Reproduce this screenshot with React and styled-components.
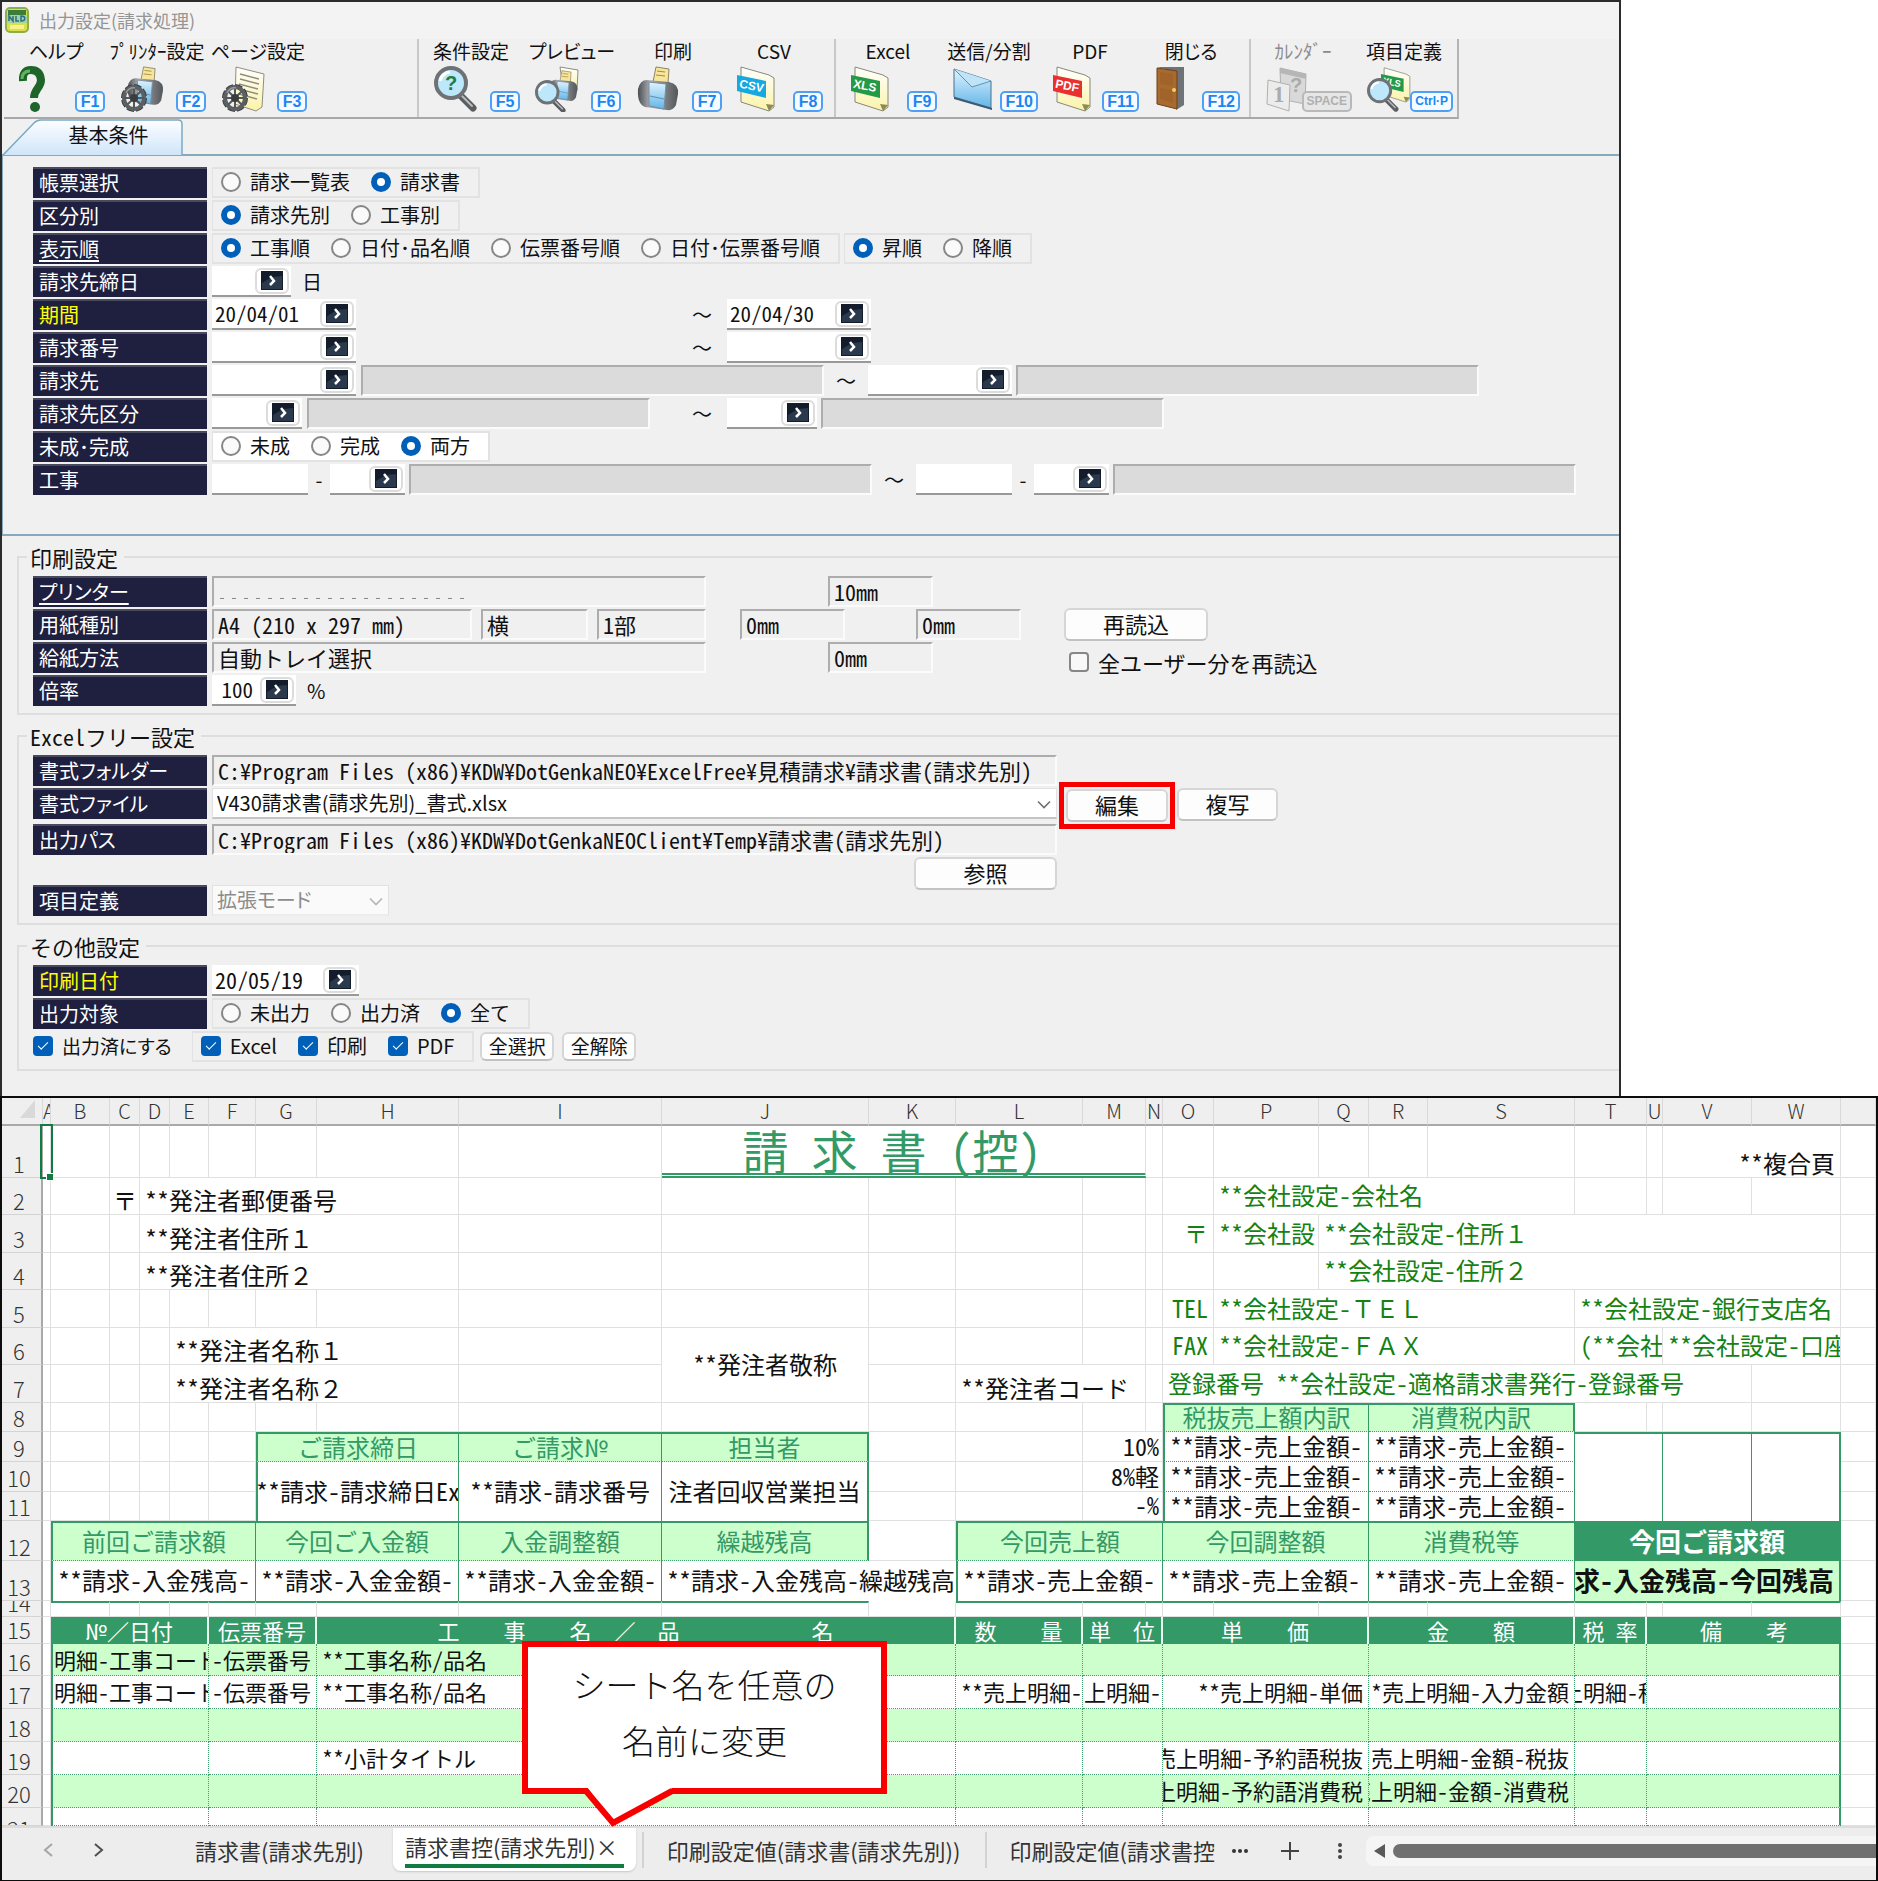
import React from 'react';
import styled, { createGlobalStyle, css } from 'styled-components';

const GREEN = '#339966';
const MINT = '#ccffcc';
const NAVY = '#1f1f40';

const Global = createGlobalStyle`
  *, *::before, *::after { box-sizing: border-box; }
  body {
    margin: 0;
    background: #fff;
    color: #111;
    font-family: "Noto Sans CJK JP", "Noto Sans", sans-serif;
    font-size: 20px;
    line-height: 24px;
  }
  button, input, select { font: inherit; color: inherit; margin: 0; }
`;

/* ---------- settings window ---------- */

const Window = styled.section`
  max-width: 1621px;
  border: 2px solid #2b2b2b;
  border-bottom: 0;
  background: #f0f0f0;
  padding-bottom: 25px;
  overflow: hidden;
  white-space: nowrap;
`;

const TitleBar = styled.header`
  display: flex;
  align-items: center;
  gap: 10px;
  height: 37px;
  padding: 0 0 2px 3px;
  background: #f3f3f3;
`;

const Title = styled.h1`
  margin: 0;
  font-size: 18px;
  font-weight: 400;
  line-height: 24px;
  color: #959595;
`;

const Toolbar = styled.nav`
  display: flex;
  width: 1455px;
  height: 80px;
  margin-left: 2px;
  border-right: 2px solid #b4b4b4;
  border-bottom: 2px solid #a8a8a8;
`;

const ToolGroup = styled.div`
  display: flex;
  padding-right: ${(p) => p.$end}px;
  & + & {
    border-left: 2px solid #c8c8c8;
  }
`;

const Tool = styled.button`
  display: flex;
  flex-direction: column;
  width: 101px;
  padding: 1px 0 0 15px;
  border: 0;
  background: none;
  color: ${(p) => (p.disabled ? '#8a8a8a' : '#111')};
`;

const ToolLabel = styled.span`
  align-self: stretch;
  display: flex;
  justify-content: center;
  margin-left: -12px;
  font-size: 19px;
  line-height: 22px;
  font-feature-settings: "palt";
`;

const ToolIcons = styled.span`
  align-self: stretch;
  display: flex;
  justify-content: space-between;
  align-items: flex-end;
  margin-top: 4px;
`;

const KeyCap = styled.kbd`
  min-width: 30px;
  height: 21px;
  margin-left: -10px;
  padding: 0 3px;
  border: 2px solid ${(p) => (p.$off ? '#b9b9b9' : '#4da0f5')};
  border-radius: 5px;
  background: ${(p) => (p.$off ? '#e6e6e6' : '#f6fbff')};
  color: ${(p) => (p.$off ? '#b0b0b0' : '#1c86f2')};
  font-family: "Liberation Sans", sans-serif;
  font-size: ${(p) => (p.$small ? 12 : 16)}px;
  font-weight: 700;
  line-height: 17px;
  text-align: center;
  position: relative;
`;

const TabStrip = styled.div`
  height: 35px;
`;

const TabButton = styled.button`
  position: relative;
  width: 181px;
  height: 36px;
  padding: 0 0 4px 32px;
  border: 0;
  background: none;
  svg { position: absolute; inset: 0; }
  span { position: relative; }
`;

const Panel = styled.div`
  display: flex;
  flex-direction: column;
  gap: 2px;
  padding: 11px 0 39px 30px;
  border: solid #86aabd;
  border-width: 2px 0 2px 1px;
`;

const Row = styled.div`
  display: flex;
  align-items: stretch;
  height: 31px;
`;

const labelLook = css`
  flex: none;
  width: 174px;
  margin-right: 5px;
  padding: 2px 0 0 6px;
  border-top: 2px solid #4a4a5e;
  background: ${NAVY};
  color: ${(p) => (p.$key ? '#ffff00' : '#fff')};
  text-decoration: ${(p) => (p.$link ? 'underline' : 'none')};
  text-underline-offset: 3px;
  font-feature-settings: "palt";
`;

const Name = styled.label`${labelLook}`;
const GroupName = styled.span`${labelLook}`;

const Group = styled.div`
  display: flex;
  align-items: center;
  gap: 21px;
  padding: 0 18px 0 8px;
  margin-right: 4px;
  border: 2px solid #e2e2e2;
  border-left-width: 1px;
  background: ${(p) => (p.$white ? '#fff' : 'transparent')};
`;

const Choice = styled.label`
  display: flex;
  align-items: center;
  gap: 9px;
  padding-bottom: 2px;
  font-size: ${(p) => p.$size || 20}px;
  font-feature-settings: ${(p) => (p.$tight ? '"palt"' : 'normal')};
`;

const Radio = styled.input.attrs({ type: 'radio' })`
  appearance: none;
  width: 20px;
  height: 20px;
  border: 2px solid #868686;
  border-radius: 50%;
  background: #fafafa;
  &:checked {
    border: 6px solid #005fb8;
    background: #fff;
  }
`;

const CheckInput = styled.input.attrs({ type: 'checkbox' })`
  appearance: none;
  display: grid;
  place-items: center;
  width: 20px;
  height: 20px;
  border: 2px solid #868686;
  border-radius: 4px;
  background: #f8f8f8;
  &:checked {
    border-color: #005fb8;
    background: #005fb8;
  }
  &:checked::before {
    content: "";
    width: 10px;
    height: 5px;
    margin-top: -3px;
    border: solid #fff;
    border-width: 0 0 1px 1px;
    transform: rotate(-45deg);
  }
`;

const EntryBox = styled.span`
  flex: none;
  display: flex;
  align-items: center;
  width: ${(p) => p.$w}px;
  padding-right: 2px;
  border-bottom: 2px solid #999;
  background: #fff;
`;

const EntryInput = styled.input`
  flex: 1;
  min-width: 0;
  padding: 0 ${(p) => (p.$align ? 7 : 3)}px 2px 3px;
  border: 0;
  background: none;
  font-size: ${(p) => p.$size || 21}px;
  font-feature-settings: "hwid";
  text-align: ${(p) => p.$align || 'left'};
`;

const PickButton = styled.button`
  flex: none;
  display: grid;
  place-items: center;
  width: 34px;
  height: 26px;
  padding: 0;
  border: 2px solid #dcdcdc;
  border-radius: 6px;
  background: #fff;
`;

const Shade = styled.input.attrs({ readOnly: true })`
  flex: none;
  width: ${(p) => p.$w}px;
  height: 31px;
  margin-left: ${(p) => p.$gap || 0}px;
  padding: 0 4px 2px;
  border: 2px solid;
  border-color: #adadad #fbfbfb #fbfbfb #adadad;
  background: ${(p) => (p.$plain ? '#f0f0f0' : '#dbdbdb')};
  font-size: 22px;
  line-height: 25px;
  font-feature-settings: "hwid";
`;

const ErasedName = styled(Shade)`
  background:
    repeating-linear-gradient(90deg, #8a8a8a 0 4px, transparent 4px 12px) 6px 20px / 250px 1px no-repeat,
    #f0f0f0;
`;

const Between = styled.span`
  flex: none;
  display: flex;
  align-items: center;
  justify-content: center;
  width: ${(p) => p.$w}px;
`;

const Lead = styled.span`
  flex: none;
  display: flex;
  width: 465px;
`;

const Unit = styled.span`
  align-self: center;
  margin-left: 11px;
`;

const Section = styled.fieldset`
  min-width: 0;
  margin: 9px 0 0 15px;
  padding: 7px 0 7px 14px;
  border: 2px solid #dedede;
  border-right: 0;
  legend {
    margin-left: -6px;
    padding: 0 6px 0 3px;
    font-size: 22px;
    line-height: 24px;
    font-feature-settings: "hwid";
  }
`;

const Rows = styled.div`
  display: flex;
  flex-direction: column;
  gap: 2px;
`;

const PrintLayout = styled.div`
  display: flex;
  align-items: flex-start;
`;

const PaperRow = styled.div`
  display: flex;
  justify-content: space-between;
  width: 494px;
`;

const Margins = styled.div`
  display: flex;
  flex-direction: column;
  align-items: center;
  gap: 2px;
  width: 281px;
  margin: 0 43px 0 34px;
`;

const MarginPair = styled.div`
  align-self: stretch;
  display: flex;
  justify-content: space-between;
`;

const Reload = styled.div`
  display: flex;
  flex-direction: column;
  gap: 9px;
  padding-top: 32px;
  ${Choice} { padding-left: 5px; }
`;

const PushButton = styled.button`
  flex: none;
  width: ${(p) => p.$w}px;
  height: ${(p) => p.$h || 33}px;
  padding: 0 0 3px;
  border: 2px solid #d6d6d6;
  border-bottom-color: #c2c2c2;
  border-radius: 6px;
  background: #fdfdfd;
  font-size: ${(p) => p.$size || 22}px;
  line-height: 24px;
`;

const Highlight = styled.span`
  flex: none;
  display: grid;
  place-items: center;
  width: 116px;
  height: 47px;
  margin: -6px 2px 0;
  border: 5px solid #f70000;
`;

const SelectWrap = styled.span`
  flex: none;
  position: relative;
  display: flex;
  width: ${(p) => p.$w}px;
  svg { position: absolute; right: 6px; top: 12px; pointer-events: none; }
`;

const Select = styled.select`
  appearance: none;
  width: 100%;
  padding: 0 4px;
  border: 1px solid #e2e2e2;
  border-bottom: 2px solid ${(p) => (p.disabled ? '#ececec' : '#c4c4c4')};
  background: ${(p) => (p.disabled ? '#fafafa' : '#fff')};
  color: ${(p) => (p.disabled ? '#8c8c8c' : '#111')};
  font-size: 20px;
  opacity: 1;
  font-feature-settings: "palt";
`;

const FileRow = styled(Row)`
  margin-bottom: 3px;
`;

const DefRow = styled.div`
  display: flex;
  justify-content: space-between;
  align-items: flex-start;
  width: 1024px;
  height: 59px;
  ${Row} { align-self: flex-end; }
`;

const FinishRow = styled(Row)`
  gap: 5px;
  ${Group} { margin: 0 1px 0 15px; }
  ${PushButton} { align-self: center; margin-right: 3px; }
`;

const Chevron = ({ color = '#707070' }) => (
  <svg width="14" height="9" viewBox="0 0 14 9" fill="none" stroke={color} strokeWidth="1.6">
    <path d="M1 1.5l6 6 6-6" />
  </svg>
);

function Pick({ label }) {
  return (
    <PickButton type="button" aria-label={label}>
      <svg width="22" height="19" viewBox="0 0 22 19">
        <rect width="22" height="19" fill="#131c2a" />
        <path d="M1 18V12L11 6l10-1v13z" fill="#2b394c" />
        <path d="M9 5l4 5-4 4" fill="none" stroke="#fff" strokeWidth="2.500" />
      </svg>
    </PickButton>
  );
}

function Entry({ id, label, w, value = '', pick = true, size, align }) {
  return (
    <EntryBox $w={w}>
      <EntryInput id={id} aria-label={label} defaultValue={value} $size={size} $align={align} />
      {pick && <Pick label={`${label} 選択`} />}
    </EntryBox>
  );
}

function Radios({ name, items, value, white }) {
  return (
    <Group role="radiogroup" aria-label={name} $white={white}>
      {items.map((t) => (
        <Choice key={t}>
          <Radio name={name} defaultChecked={t === value} />
          {t}
        </Choice>
      ))}
    </Group>
  );
}

function Check({ text, on, size, tight }) {
  return (
    <Choice $size={size} $tight={tight}>
      <CheckInput defaultChecked={on} />
      {text}
    </Choice>
  );
}

/* ---------- toolbar drawings ---------- */

const Svg = ({ children, off }) => (
  <svg width="44" height="46" viewBox="0 0 44 46" opacity={off ? 0.8 : 1} aria-hidden="true">
    <defs>
      <linearGradient id="metal" x1="0" x2="1">
        <stop offset="0" stopColor="#4c4f52" />
        <stop offset=".3" stopColor="#a9adb1" />
        <stop offset="1" stopColor="#54575a" />
      </linearGradient>
      <linearGradient id="sky" x1="0" y1="0" x2="0" y2="1">
        <stop offset="0" stopColor="#dff3ff" />
        <stop offset="1" stopColor="#62b5e8" />
      </linearGradient>
      <linearGradient id="paper" x1="0" y1="0" x2="0" y2="1">
        <stop offset="0" stopColor="#ffffff" />
        <stop offset="1" stopColor="#fbf3a8" />
      </linearGradient>
    </defs>
    {children}
  </svg>
);

const PrinterShape = () => (
  <g>
    <path d="M17 16l3-15 13 2-1 14z" fill="#f8e59a" stroke="#8a8567" />
    <path d="M21 5l8 1M20 9l9 1" stroke="#9c8b4a" />
    <path d="M2 23q2-9 9-9l22 2q10 2 9 12l-2 11q-3 6-9 5L9 41q-8-3-7-18z" fill="url(#metal)" />
    <path d="M13 16l17 2-2 25-15-3z" fill="url(#sky)" stroke="#7b8d99" />
    <path d="M14 30l14 3" stroke="#5591b8" />
  </g>
);

const SPOKES = [0, 45, 90, 135];

const GearShape = () => (
  <g>
    <ellipse cx="14" cy="32" rx="11" ry="12" fill="none" stroke="#3a3c3e" strokeWidth="4" strokeDasharray="7 2" />
    <ellipse cx="14" cy="32" rx="10" ry="11" fill="none" stroke="#5d6063" strokeWidth="4" />
    {SPOKES.map((a) => (
      <path key={a} d="M14 22v20" stroke="#55585b" strokeWidth="2" transform={`rotate(${a} 14 32)`} />
    ))}
    <circle cx="14" cy="32" r="4" fill="#3a3c3e" />
    <path d="M6 27q3-6 9-5" stroke="#9a9da0" fill="none" strokeWidth="1.500" />
  </g>
);

const PageShape = () => (
  <g>
    <path d="M15 1l28 7-2 33-6 4-21-7z" fill="url(#paper)" stroke="#8f8e7c" />
    <path d="M19 8l19 5M19 13l19 5M18 18l19 5M18 23l19 5M18 28l18 5" stroke="#8f8e7c" strokeWidth="1.500" />
  </g>
);

const Lens = ({ children }) => (
  <g>
    <path d="M25 28l14 14" stroke="#5b5e61" strokeWidth="7" strokeLinecap="round" />
    <path d="M25 27l13 13" stroke="#b9bcbf" strokeWidth="2" strokeLinecap="round" />
    <ellipse cx="17" cy="17" rx="15" ry="15" fill="#bde7fb" stroke="#6e7275" strokeWidth="4" />
    <path d="M6 15q2-8 10-9" stroke="#fff" strokeWidth="3" fill="none" />
    {children}
  </g>
);

const FileShape = ({ text, color }) => (
  <g>
    <path d="M4 1l28 8 5 3v29l-5 4-28-9z" fill="url(#paper)" stroke="#87877b" />
    <path d="M37 39l-8-1 3 7z" fill="#8d8a55" />
    <path d="M0 9l29 6v17L0 25z" fill={color} />
    <text x="2" y="22" fontFamily="Liberation Sans, sans-serif" fontSize="12" fontWeight="700" fill="#fff" transform="rotate(11 4 20)">{text}</text>
  </g>
);

const ICONS = {
  help: (
    <Svg>
      <path d="M4 15q-1-11 8-11t10 10c0 8-7 9-7 18" fill="none" stroke="#1f6428" strokeWidth="8" />
      <path d="M3 13q0-8 8-8" fill="none" stroke="#5fb45f" strokeWidth="3" />
      <circle cx="16" cy="41" r="5" fill="#1f6428" />
    </Svg>
  ),
  printerGear: (
    <Svg>
      <g transform="translate(6 0) scale(.88)"><PrinterShape /></g>
      <GearShape />
    </Svg>
  ),
  pageGear: <Svg><PageShape /><GearShape /></Svg>,
  ask: (
    <Svg>
      <Lens>
        <text x="11" y="24" fontFamily="Liberation Sans, sans-serif" fontSize="20" fontWeight="700" fill="#267c3c">?</text>
      </Lens>
    </Svg>
  ),
  preview: (
    <Svg>
      <path d="M25 1l18 3-1 20-14-2z" fill="url(#paper)" stroke="#8f8e7c" />
      <g transform="translate(13 4) scale(.7)"><PrinterShape /></g>
      <g transform="translate(0 14) scale(.72)"><Lens /></g>
    </Svg>
  ),
  printer: <Svg><PrinterShape /></Svg>,
  csv: <Svg><FileShape text="CSV" color="#16a8e0" /></Svg>,
  xls: <Svg><FileShape text="XLS" color="#229a48" /></Svg>,
  pdf: <Svg><FileShape text="PDF" color="#ea2f2f" /></Svg>,
  mail: (
    <Svg>
      <path d="M2 3l37 12v27L2 31z" fill="url(#sky)" stroke="#4c6f88" />
      <path d="M2 3l18 18L39 15" fill="#bfe4f8" stroke="#5b93b7" />
      <path d="M2 31l38 11v2L2 33z" fill="#3c5a70" />
    </Svg>
  ),
  door: (
    <Svg>
      <path d="M3 1h27v38l-8 5V6z" fill="#6f7276" />
      <path d="M3 2l20 3v38L3 38z" fill="#a86a2f" stroke="#6b4119" />
      <path d="M6 6l13 2v12L6 18zM6 22l13 2v13L6 33z" fill="#a0642a" />
      <circle cx="20" cy="24" r="2" fill="#f0cf5d" />
    </Svg>
  ),
  calendar: (
    <Svg off>
      <path d="M14 2l26 6-1 30-24-5z" fill="#d4d4d4" stroke="#a0a0a0" />
      <path d="M14 2l26 6v5L14 7z" fill="#a8a8a8" />
      <path d="M2 14l22 5-1 26-22-7z" fill="#ececec" stroke="#a0a0a0" />
      <text x="7" y="36" fontFamily="Liberation Serif, serif" fontSize="23" fontWeight="700" fill="#9a9a9a">1</text>
      <text x="24" y="26" fontFamily="Liberation Sans, sans-serif" fontSize="20" fontWeight="700" fill="#9a9a9a">?</text>
    </Svg>
  ),
  define: (
    <Svg>
      <g transform="translate(14 1) scale(.78)"><FileShape text="XLS" color="#229a48" /></g>
      <g transform="translate(0 12) scale(.74)"><Lens /></g>
    </Svg>
  ),
};

const TOOLS = [
  { end: 110, items: [['ヘルプ', 'help', 'F1'], ['ﾌﾟﾘﾝﾀｰ設定', 'printerGear', 'F2'], ['ページ設定', 'pageGear', 'F3']] },
  { end: 11, items: [['条件設定', 'ask', 'F5'], ['プレビュー', 'preview', 'F6'], ['印刷', 'printer', 'F7'], ['CSV', 'csv', 'F8']] },
  { end: 9, items: [['Excel', 'xls', 'F9'], ['送信/分割', 'mail', 'F10'], ['PDF', 'pdf', 'F11'], ['閉じる', 'door', 'F12']] },
  { end: 4, items: [['ｶﾚﾝﾀﾞｰ', 'calendar', 'SPACE'], ['項目定義', 'define', 'Ctrl·P']] },
];

function SettingsWindow() {
  return (
    <Window>
      <TitleBar>
        <svg width="24" height="26" viewBox="0 0 24 26" aria-hidden="true">
          <rect x="1" y="1" width="22" height="24" rx="4" fill="#dbe04a" stroke="#8fae4a" strokeWidth="2" />
          <rect x="3" y="3" width="18" height="5" fill="#3d7d3a" />
          <rect x="2" y="8" width="20" height="8" fill="#a5d3a0" />
          <path d="M4 14V9l4 5V9M11 9v5h3M16 14c5 0 5-5 0-5z" stroke="#2a6f86" strokeWidth="1.500" fill="none" />
          <path d="M5 20h14" stroke="#f6f28e" strokeWidth="4" />
        </svg>
        <Title>出力設定(請求処理)</Title>
      </TitleBar>
      <Toolbar>
        {TOOLS.map((g) => (
          <ToolGroup key={g.items[0][0]} $end={g.end}>
            {g.items.map(([label, icon, key]) => (
              <Tool key={key} type="button" disabled={key === 'SPACE'}>
                <ToolLabel>{label}</ToolLabel>
                <ToolIcons>
                  {ICONS[icon]}
                  <KeyCap $small={key.length > 3} $off={key === 'SPACE'}>{key}</KeyCap>
                </ToolIcons>
              </Tool>
            ))}
          </ToolGroup>
        ))}
      </Toolbar>
      <TabStrip>
        <TabButton type="button">
          <svg width="181" height="36" viewBox="0 0 181 36" aria-hidden="true">
            <defs>
              <linearGradient id="tab" x1="0" y1="0" x2="0" y2="1">
                <stop offset="0" stopColor="#fdfeff" />
                <stop offset="1" stopColor="#cfe5fa" />
              </linearGradient>
            </defs>
            <path d="M1 36L32 4q3-3 7-3h137q4 0 4 4v31" fill="url(#tab)" stroke="#79a9c4" strokeWidth="1.500" />
          </svg>
          <span>基本条件</span>
        </TabButton>
      </TabStrip>
      <Panel>
        <Row>
          <GroupName>帳票選択</GroupName>
          <Radios name="帳票選択" items={['請求一覧表', '請求書']} value="請求書" />
        </Row>
        <Row>
          <GroupName>区分別</GroupName>
          <Radios name="区分別" items={['請求先別', '工事別']} value="請求先別" />
        </Row>
        <Row>
          <GroupName $link>表示順</GroupName>
          <Radios name="表示順" items={['工事順', '日付･品名順', '伝票番号順', '日付･伝票番号順']} value="工事順" />
          <Radios name="並び" items={['昇順', '降順']} value="昇順" />
        </Row>
        <Row>
          <Name htmlFor="close">請求先締日</Name>
          <Entry id="close" label="請求先締日" w={79} />
          <Unit>日</Unit>
        </Row>
        <Row>
          <Name htmlFor="term" $key>期間</Name>
          <Lead><Entry id="term" label="期間 開始" w={144} value="20/04/01" /></Lead>
          <Between $w={50}>～</Between>
          <Entry label="期間 終了" w={144} value="20/04/30" />
        </Row>
        <Row>
          <Name htmlFor="no">請求番号</Name>
          <Lead><Entry id="no" label="請求番号 開始" w={144} /></Lead>
          <Between $w={50}>～</Between>
          <Entry label="請求番号 終了" w={144} />
        </Row>
        <Row>
          <Name htmlFor="dest">請求先</Name>
          <Entry id="dest" label="請求先 開始" w={144} />
          <Shade $w={463} $gap={5} aria-label="請求先名 開始" />
          <Between $w={44}>～</Between>
          <Entry label="請求先 終了" w={144} />
          <Shade $w={463} $gap={4} aria-label="請求先名 終了" />
        </Row>
        <Row>
          <Name htmlFor="kind">請求先区分</Name>
          <Lead>
            <Entry id="kind" label="請求先区分 開始" w={90} />
            <Shade $w={343} $gap={5} aria-label="請求先区分名 開始" />
          </Lead>
          <Between $w={50}>～</Between>
          <Entry label="請求先区分 終了" w={90} />
          <Shade $w={343} $gap={4} aria-label="請求先区分名 終了" />
        </Row>
        <Row>
          <GroupName>未成･完成</GroupName>
          <Radios name="未成･完成" items={['未成', '完成', '両方']} value="両方" white />
        </Row>
        <Row>
          <Name htmlFor="work">工事</Name>
          <Entry id="work" label="工事 開始" w={96} pick={false} />
          <Between $w={22}>-</Between>
          <Entry label="工事 枝番 開始" w={75} />
          <Shade $w={463} $gap={4} aria-label="工事名 開始" />
          <Between $w={44}>～</Between>
          <Entry label="工事 終了" w={96} pick={false} />
          <Between $w={22}>-</Between>
          <Entry label="工事 枝番 終了" w={75} />
          <Shade $w={463} $gap={4} aria-label="工事名 終了" />
        </Row>
      </Panel>

      <Section>
        <legend>印刷設定</legend>
        <PrintLayout>
          <Rows>
            <Row>
              <GroupName $link>プリンター</GroupName>
              <ErasedName $w={494} aria-label="プリンター" />
            </Row>
            <Row>
              <GroupName>用紙種別</GroupName>
              <PaperRow>
                <Shade $w={260} $plain aria-label="用紙" defaultValue="A4 (210 x 297 mm)" />
                <Shade $w={107} $plain aria-label="向き" defaultValue="横" />
                <Shade $w={109} $plain aria-label="部数" defaultValue="1部" />
              </PaperRow>
            </Row>
            <Row>
              <GroupName>給紙方法</GroupName>
              <Shade $w={494} $plain aria-label="給紙方法" defaultValue="自動トレイ選択" />
            </Row>
            <Row>
              <Name htmlFor="zoom">倍率</Name>
              <Entry id="zoom" label="倍率" w={84} value="100" align="right" />
              <Unit>%</Unit>
            </Row>
          </Rows>
          <Margins>
            <Shade $w={105} $plain aria-label="上余白" defaultValue="10mm" />
            <MarginPair>
              <Shade $w={105} $plain aria-label="左余白" defaultValue="0mm" />
              <Shade $w={105} $plain aria-label="右余白" defaultValue="0mm" />
            </MarginPair>
            <Shade $w={105} $plain aria-label="下余白" defaultValue="0mm" />
          </Margins>
          <Reload>
            <PushButton type="button" $w={144}>再読込</PushButton>
            <Check text="全ユーザー分を再読込" size={22} />
          </Reload>
        </PrintLayout>
      </Section>

      <Section>
        <legend>Excelフリー設定</legend>
        <Rows>
          <Row>
            <GroupName>書式フォルダー</GroupName>
            <Shade $w={845} $plain aria-label="書式フォルダー" defaultValue="C:¥Program Files (x86)¥KDW¥DotGenkaNEO¥ExcelFree¥見積請求¥請求書(請求先別)" />
          </Row>
          <FileRow>
            <Name htmlFor="file">書式ファイル</Name>
            <SelectWrap $w={845}>
              <Select id="file"><option>V430請求書(請求先別)_書式.xlsx</option></Select>
              <Chevron />
            </SelectWrap>
            <Highlight><PushButton type="button" $w={102}>編集</PushButton></Highlight>
            <PushButton type="button" $w={101}>複写</PushButton>
          </FileRow>
          <Row>
            <GroupName>出力パス</GroupName>
            <Shade $w={845} $plain aria-label="出力パス" defaultValue="C:¥Program Files (x86)¥KDW¥DotGenkaNEOClient¥Temp¥請求書(請求先別)" />
          </Row>
          <DefRow>
            <Row>
              <Name htmlFor="def">項目定義</Name>
              <SelectWrap $w={177}>
                <Select id="def" disabled><option>拡張モード</option></Select>
                <Chevron color="#b5b5b5" />
              </SelectWrap>
            </Row>
            <PushButton type="button" $w={143}>参照</PushButton>
          </DefRow>
        </Rows>
      </Section>

      <Section>
        <legend>その他設定</legend>
        <Rows>
          <Row>
            <Name htmlFor="date" $key>印刷日付</Name>
            <Entry id="date" label="印刷日付" w={147} value="20/05/19" size={22} />
          </Row>
          <Row>
            <GroupName>出力対象</GroupName>
            <Radios name="出力対象" items={['未出力', '出力済', '全て']} value="全て" />
          </Row>
          <FinishRow>
            <Check text="出力済にする" on size={19} tight />
            <Group>
              <Check text="Excel" on tight />
              <Check text="印刷" on tight />
              <Check text="PDF" on tight />
            </Group>
            <PushButton type="button" $w={74} $h={29} $size={19}>全選択</PushButton>
            <PushButton type="button" $w={74} $h={29} $size={19}>全解除</PushButton>
          </FinishRow>
        </Rows>
      </Section>
    </Window>
  );
}

/* ---------- spreadsheet ---------- */

const Book = styled.section`
  position: relative;
  border: 2px solid #0d0d0d;
  background: #fff;
  overflow: hidden;
`;

const Grid = styled.table`
  width: 100%;
  table-layout: fixed;
  border-collapse: separate;
  border-spacing: 0;
`;

const ColHead = styled.th`
  height: 27px;
  padding: 0;
  border-right: 1px solid #d9d9d9;
  border-bottom: 2px solid #a9a9a9;
  background: #efefef;
  color: #333;
  font-size: 20px;
  font-weight: 300;
  line-height: 24px;
  overflow: ${(p) => (p.$clip ? 'hidden' : 'visible')};
`;

const RowHead = styled.th`
  padding: 0;
  border-right: 2px solid #a9a9a9;
  border-bottom: 1px solid #d4d4d4;
  background: #efefef;
  color: #333;
  font-size: 22px;
  font-weight: 300;
  vertical-align: bottom;
`;

const RowNumber = styled.div`
  display: flex;
  align-items: ${(p) => (p.$last ? 'flex-start' : 'flex-end')};
  justify-content: center;
  height: ${(p) => p.$h - 1}px;
  padding: ${(p) => (p.$last ? '8px 5px 0 0' : '0 5px 2px 0')};
  line-height: 24px;
  overflow: ${(p) => (p.$h < 20 ? 'hidden' : 'visible')};
`;

const EDGE = {
  g: '1px solid #e0e0e0',
  G: `1px solid ${GREEN}`,
  T: `2px solid ${GREEN}`,
  D: `5px double ${GREEN}`,
  d: '1px dotted #3f9f6f',
  w: '2px solid #e8fff0',
  n: '0',
};
const EDGE_SIZE = { g: 1, G: 1, T: 2, D: 5, d: 1, w: 2, n: 0 };

const Cell = styled.td`
  position: relative;
  z-index: ${(p) => (p.$front ? 1 : 'auto')};
  padding: 0;
  border-top: ${(p) => EDGE[p.$t]};
  border-right: ${(p) => EDGE[p.$r]};
  border-bottom: ${(p) => EDGE[p.$b]};
  border-left: ${(p) => EDGE[p.$l]};
  background: ${(p) => p.$bg};
  color: ${(p) => p.$fg};
  font-size: ${(p) => p.$size}px;
  font-weight: ${(p) => p.$weight};
`;

const CellText = styled.div`
  display: flex;
  align-items: ${(p) => p.$v};
  justify-content: ${(p) => p.$a};
  height: ${(p) => p.$h}px;
  padding: 0 ${(p) => p.$pad}px 2px;
  overflow-x: clip;
  white-space: pre;
  line-height: 1;
  font-feature-settings: "hwid";
`;

const Line = styled.span`
  flex: none;
`;

const Wide = styled.span`
  font-feature-settings: normal;
`;

const Cursor = styled.i`
  position: absolute;
  inset: -2px -3px -2px -3px;
  border: 2px solid #107c41;
  &::after {
    content: "";
    position: absolute;
    right: -3px;
    bottom: -4px;
    width: 8px;
    height: 8px;
    border: 1px solid #fff;
    background: #107c41;
  }
`;

const COLS = [
  ['A', 8], ['B', 59], ['C', 30], ['D', 30], ['E', 39], ['F', 47], ['G', 61], ['H', 142],
  ['I', 203], ['J', 207], ['K', 87], ['L', 127], ['M', 63], ['N', 17], ['O', 51], ['P', 105],
  ['Q', 50], ['R', 59], ['S', 147], ['T', 72], ['U', 16], ['V', 89], ['W', 89], ['', null],
];
const at = (letter) => COLS.findIndex((c) => c[0] === letter);

const cell = (range, text, opts = {}) => {
  const [from, to] = range.split(':');
  return { from: at(from), to: at(to || from), text, ...opts };
};

const info = { fg: '#138213' };
const head = { bg: MINT, fg: GREEN, a: 'center', b: 'd', r: 'G' };
const low = { v: 'flex-end' };
const val = { r: 'G', b: 'n' };

const titles = { bg: GREEN, fg: '#fff', a: 'center', b: 'n', r: 'w', size: 22 };
const TITLES = [
  ['B:E', '№／日付'], ['F:G', '伝票番号'], ['H:K', '工　　事　　名　／　品　　　　　　名'],
  ['L', '数　　量'], ['M:N', '単　位'], ['O:Q', '単　　価'], ['R:S', '金　　額'], ['T', '税 率'], ['U:W', '備　　考'],
];

const detail = (texts, bg) =>
  TITLES.map(([range]) => {
    const right = ['F:G', 'O:Q', 'R:S'].includes(range);
    const mid = ['M:N', 'T'].includes(range);
    return cell(range, texts[range], {
      bg,
      size: 22,
      pad: range === 'B:E' ? 1 : 5,
      a: right ? 'flex-end' : mid ? 'center' : 'flex-start',
      b: 'd',
      r: range === 'U:W' ? 'T' : 'd',
      l: range === 'B:E' ? 'T' : 'n',
    });
  });

const amounts = (t) => [
  cell('O:Q', '**請求-売上金額-', { b: t, r: 'G', l: 'T' }),
  cell('R:S', '**請求-売上金額-', { b: t, r: 'G' }),
];

const SHEET = [
  { n: 1, h: 52, cells: [
    cell('J:M', '請 求 書 (控) ', { fg: GREEN, a: 'center', b: 'D', size: 46 }),
    cell('V:W', '**複合頁', { a: 'flex-end', ...low }),
  ] },
  { n: 2, h: 37, cells: [
    cell('C', '〒', { ...low, pad: 2, a: 'flex-end' }), cell('D:H', '**発注者郵便番号', low),
    cell('P:S', '**会社設定-会社名', info),
  ] },
  { n: 3, h: 38, cells: [
    cell('D:H', '**発注者住所１', low), cell('O', '〒', { ...info, a: 'flex-end' }),
    cell('P', '**会社設', info), cell('Q:W', '**会社設定-住所１', info),
  ] },
  { n: 4, h: 37, cells: [cell('D:H', '**発注者住所２', low), cell('Q:W', '**会社設定-住所２', info)] },
  { n: 5, h: 38, cells: [
    cell('O', 'TEL', { ...info, a: 'flex-end' }), cell('P:S', '**会社設定-ＴＥＬ', info),
    cell('T:W', '**会社設定-銀行支店名', info),
  ] },
  { n: 6, h: 37, cells: [
    cell('E:H', '**発注者名称１', low), cell('J', '**発注者敬称', { rows: 2, a: 'center' }),
    cell('O', 'FAX', { ...info, a: 'flex-end' }), cell('P:S', '**会社設定-ＦＡＸ', info),
    cell('T:U', '(**会社', info), cell('V:W', '**会社設定-口座', info),
  ] },
  { n: 7, h: 38, cells: [
    cell('E:H', '**発注者名称２', low), cell('L:M', '**発注者コード', low),
    cell('O:V', '登録番号 **会社設定-適格請求書発行-登録番号', info),
  ] },
  { n: 8, h: 29, cells: [
    cell('O:Q', '税抜売上額内訳', { ...head, t: 'T', l: 'T' }),
    cell('R:S', '消費税内訳', { ...head, t: 'T', r: 'T' }),
  ] },
  { n: 9, h: 30, cells: [
    cell('G:H', 'ご請求締日', { ...head, t: 'T', l: 'T' }), cell('I', 'ご請求№', { ...head, t: 'T' }),
    cell('J', '担当者', { ...head, t: 'T', r: 'T' }), cell('M:N', '10%', { a: 'flex-end', pad: 3 }),
    ...amounts('d'),
    cell('T:U', '', { rows: 3, t: 'T', ...val }), cell('V', '', { rows: 3, t: 'T', ...val }),
    cell('W', '', { rows: 3, t: 'T', r: 'T', b: 'n' }),
  ] },
  { n: 10, h: 30, cells: [
    cell('G:H', '**請求-請求締日Ex', { rows: 2, l: 'T', a: 'center', ...val }),
    cell('I', '**請求-請求番号', { rows: 2, a: 'center', ...val }),
    cell('J', '注者回収営業担当', { rows: 2, a: 'center', r: 'T', b: 'n' }),
    cell('M:N', '8%軽', { a: 'flex-end', pad: 3 }), ...amounts('d'),
  ] },
  { n: 11, h: 29, cells: [cell('M:N', '-%', { a: 'flex-end', pad: 3 }), ...amounts('n')] },
  { n: 12, h: 40, cells: [
    cell('B:F', '前回ご請求額', { ...head, t: 'T', l: 'T' }), cell('G:H', '今回ご入金額', { ...head, t: 'T' }),
    cell('I', '入金調整額', { ...head, t: 'T' }), cell('J', '繰越残高', { ...head, t: 'T', r: 'T' }),
    cell('L:N', '今回売上額', { ...head, t: 'T', l: 'T' }), cell('O:Q', '今回調整額', { ...head, t: 'T' }),
    cell('R:S', '消費税等', { ...head, t: 'T' }),
    cell('T:W', '今回ご請求額', { bg: GREEN, fg: '#fff', weight: 700, size: 26, a: 'center', b: 'n', t: 'T', r: 'T' }),
  ] },
  { n: 13, h: 40, cells: [
    cell('B:F', '**請求-入金残高-', { l: 'T', ...val }), cell('G:H', '**請求-入金金額-', val),
    cell('I', '**請求-入金金額-', val), cell('J:K', '**請求-入金残高-繰越残高', { r: 'n', b: 'n' }),
    cell('L:N', '**請求-売上金額-', { l: 'T', ...val }), cell('O:Q', '**請求-売上金額-', val),
    cell('R:S', '**請求-売上金額-', val),
    cell('T:W', '求-入金残高-今回残高', { bg: MINT, weight: 700, size: 26, a: 'flex-end', r: 'T', b: 'n' }),
  ] },
  { n: 14, h: 16, blank: (i) => ({ t: i > 0 && i < 23 && i !== at('K') ? 'T' : 'n' }), cells: [] },
  { n: 15, h: 27, cells: TITLES.map(([range, text]) => cell(range, text, { ...titles, r: range === 'U:W' ? 'n' : 'w' })) },
  { n: 16, h: 32, cells: detail({ 'B:E': '明細-工事コード', 'F:G': '-伝票番号', 'H:K': '**工事名称/品名' }, MINT) },
  { n: 17, h: 33, cells: detail({
    'B:E': '明細-工事コード', 'F:G': '-伝票番号', 'H:K': '**工事名称/品名', L: '**売上明細-', 'M:N': '上明細-',
    'O:Q': '**売上明細-単価', 'R:S': '**売上明細-入力金額', T: '上明細-税',
  }, '#fff') },
  { n: 18, h: 33, cells: detail({}, MINT) },
  { n: 19, h: 33, cells: detail({ 'H:K': '**小計タイトル', 'O:Q': '売上明細-予約語税抜', 'R:S': '*売上明細-金額-税抜' }, '#fff') },
  { n: 20, h: 33, cells: detail({ 'O:Q': '売上明細-予約語消費税', 'R:S': '売上明細-金額-消費税' }, MINT) },
  { n: 21, h: 18, cells: detail({}, '#fff') },
];

function buildRows() {
  const held = COLS.map(() => 0);
  return SHEET.map((row, ri) => {
    const out = [];
    for (let i = 0; i < COLS.length; i += 1) {
      if (held[i] > 0) {
        held[i] -= 1;
        continue;
      }
      const found = row.cells.find((c) => c.from === i);
      const c = found || { from: i, to: i, ...(row.blank ? row.blank(i) : {}) };
      const rows = c.rows || 1;
      for (let k = c.from; k <= c.to; k += 1) held[k] = rows - 1;
      const h = SHEET.slice(ri, ri + rows).reduce((s, r) => s + r.h, 0);
      out.push({ t: 'n', r: 'g', b: 'g', l: 'n', ...c, rows, h });
      i = c.to;
    }
    return { ...row, out };
  });
}

/* Full-width letters, digits, spaces and № keep their full advance. */
const mixed = (text) =>
  text.split(/([\uff01-\uff5e\u3000\u2116]+)/).map((part, i) => (i % 2 ? <Wide key={i}>{part}</Wide> : part));

const TabBar = styled.footer`
  display: flex;
  align-items: stretch;
  height: 54px;
  border-top: 2px solid #dcdcdc;
  background: #ededed;
  color: #333;
  white-space: nowrap;
  font-size: 22px;
`;

const TabNav = styled.div`
  display: flex;
  align-items: flex-start;
  gap: 35px;
  width: 182px;
  padding: 14px 0 0 38px;
`;

const IconButton = styled.button`
  flex: none;
  display: grid;
  place-items: center;
  width: ${(p) => p.$w || 16}px;
  padding: 0 0 6px;
  border: 0;
  background: none;
`;

const SheetTab = styled.button`
  height: 36px;
  margin-top: 4px;
  padding: 0 ${(p) => p.$end || 24}px 0 ${(p) => p.$start || 23}px;
  border: 0;
  border-left: ${(p) => (p.$line ? '2px solid #d2d2d2' : '0')};
  background: none;
  line-height: 32px;
`;

const ActiveTab = styled.button`
  height: 43px;
  margin-right: 6px;
  padding: 0 12px;
  border: 0;
  border-radius: 0 0 8px 8px;
  background: #fff;
  box-shadow: 0 1px 2px #c8c8c8;
  span {
    display: block;
    height: 37px;
    padding: 0 6px 0 0;
    border-bottom: 4px solid #107c41;
    line-height: 30px;
  }
`;

const ScrollTrack = styled.div`
  flex: 1;
  display: flex;
  align-items: center;
  gap: 8px;
  height: 30px;
  margin: 8px 0 0 14px;
  padding-left: 8px;
  border-radius: 8px 0 0 8px;
  background: #f5f5f5;
`;

const Thumb = styled.div`
  flex: 1;
  height: 14px;
  border-radius: 7px 0 0 7px;
  background: #707070;
`;

const Callout = styled.aside`
  position: absolute;
  left: 520px;
  bottom: 86px;
  width: 365px;
  height: 153px;
  padding: 9px 0;
  border: 6px solid #f80000;
  background: #fff;
  color: #111;
  font-size: 33px;
  font-weight: 300;
  line-height: 56px;
  text-align: center;
  p { margin: 0; }
  svg { position: absolute; left: 54px; top: 140px; }
`;

function Workbook() {
  return (
    <Book>
      <Grid>
        <colgroup>
          <col style={{ width: 41 }} />
          {COLS.map(([c, w]) => <col key={c} style={w ? { width: w } : undefined} />)}
        </colgroup>
        <thead>
          <tr>
            <ColHead aria-label="全選択">
              <svg width="36" height="22" viewBox="0 0 36 22"><path d="M31 2v18H16z" fill="#d9d9d9" /></svg>
            </ColHead>
            {COLS.map(([c]) => <ColHead key={c} $clip={c === 'A'}>{c}</ColHead>)}
          </tr>
        </thead>
        <tbody>
          {buildRows().map((row) => (
            <tr key={row.n}>
              <RowHead scope="row"><RowNumber $h={row.h} $last={row.n === 21}>{row.n}</RowNumber></RowHead>
              {row.out.map((c) => {
                const active = row.n === 1 && c.from === 0;
                return (
                  <Cell
                    key={c.from}
                    colSpan={c.to - c.from + 1}
                    rowSpan={c.rows}
                    $front={active}
                    $t={c.t}
                    $r={c.r}
                    $b={c.b}
                    $l={c.l}
                    $bg={c.bg || '#fff'}
                    $fg={c.fg || '#111'}
                    $size={c.size || 24}
                    $weight={c.weight || 400}
                  >
                    {c.text && (
                      <CellText
                        $a={c.a || 'flex-start'}
                        $v={c.v || 'center'}
                        $h={c.h - EDGE_SIZE[c.t] - EDGE_SIZE[c.b]}
                        $pad={c.pad || 5}
                      >
                        <Line>{mixed(c.text)}</Line>
                      </CellText>
                    )}
                    {active && <Cursor />}
                  </Cell>
                );
              })}
            </tr>
          ))}
        </tbody>
      </Grid>
      <TabBar>
        <TabNav>
          <IconButton type="button" aria-label="前のシート">
            <svg width="12" height="16" viewBox="0 0 12 16" fill="none" stroke="#a5a5a5" strokeWidth="2"><path d="M10 2L3 8l7 6" /></svg>
          </IconButton>
          <IconButton type="button" aria-label="次のシート">
            <svg width="12" height="16" viewBox="0 0 12 16" fill="none" stroke="#505050" strokeWidth="2"><path d="M2 2l7 6-7 6" /></svg>
          </IconButton>
        </TabNav>
        <SheetTab type="button" $start={11} $end={29}>請求書(請求先別)</SheetTab>
        <ActiveTab type="button"><span>請求書控(請求先別)×</span></ActiveTab>
        <SheetTab type="button" $line>印刷設定値(請求書(請求先別))</SheetTab>
        <SheetTab type="button" $line $end={13}>印刷設定値(請求書控</SheetTab>
        <IconButton type="button" aria-label="他のシート" $w={24}>
          <svg width="18" height="6" viewBox="0 0 18 6" fill="#333"><circle cx="3" cy="3" r="2" /><circle cx="9" cy="3" r="2" /><circle cx="15" cy="3" r="2" /></svg>
        </IconButton>
        <IconButton type="button" aria-label="シートの追加" $w={76}>
          <svg width="18" height="18" viewBox="0 0 18 18" stroke="#444" strokeWidth="2"><path d="M9 0v18M0 9h18" /></svg>
        </IconButton>
        <IconButton type="button" aria-label="メニュー" $w={24}>
          <svg width="6" height="18" viewBox="0 0 6 18" fill="#444"><circle cx="3" cy="3" r="2" /><circle cx="3" cy="9" r="2" /><circle cx="3" cy="15" r="2" /></svg>
        </IconButton>
        <ScrollTrack>
          <svg width="11" height="14" viewBox="0 0 11 14" fill="#5a5a5a"><path d="M11 0v14L0 7z" /></svg>
          <Thumb />
        </ScrollTrack>
      </TabBar>
      <Callout>
        <p>シート名を任意の</p>
        <p>名前に変更</p>
        <svg width="96" height="42" viewBox="0 0 96 42">
          <path d="M3 0h90v1H3z" fill="#fff" />
          <path d="M5 0L31 34 92 0z" fill="#fff" />
          <path d="M4 4L31 36 90 4" fill="none" stroke="#f80000" strokeWidth="6" />
        </svg>
      </Callout>
    </Book>
  );
}

export default function App() {
  return (
    <>
      <Global />
      <main>
        <SettingsWindow />
        <Workbook />
      </main>
    </>
  );
}
